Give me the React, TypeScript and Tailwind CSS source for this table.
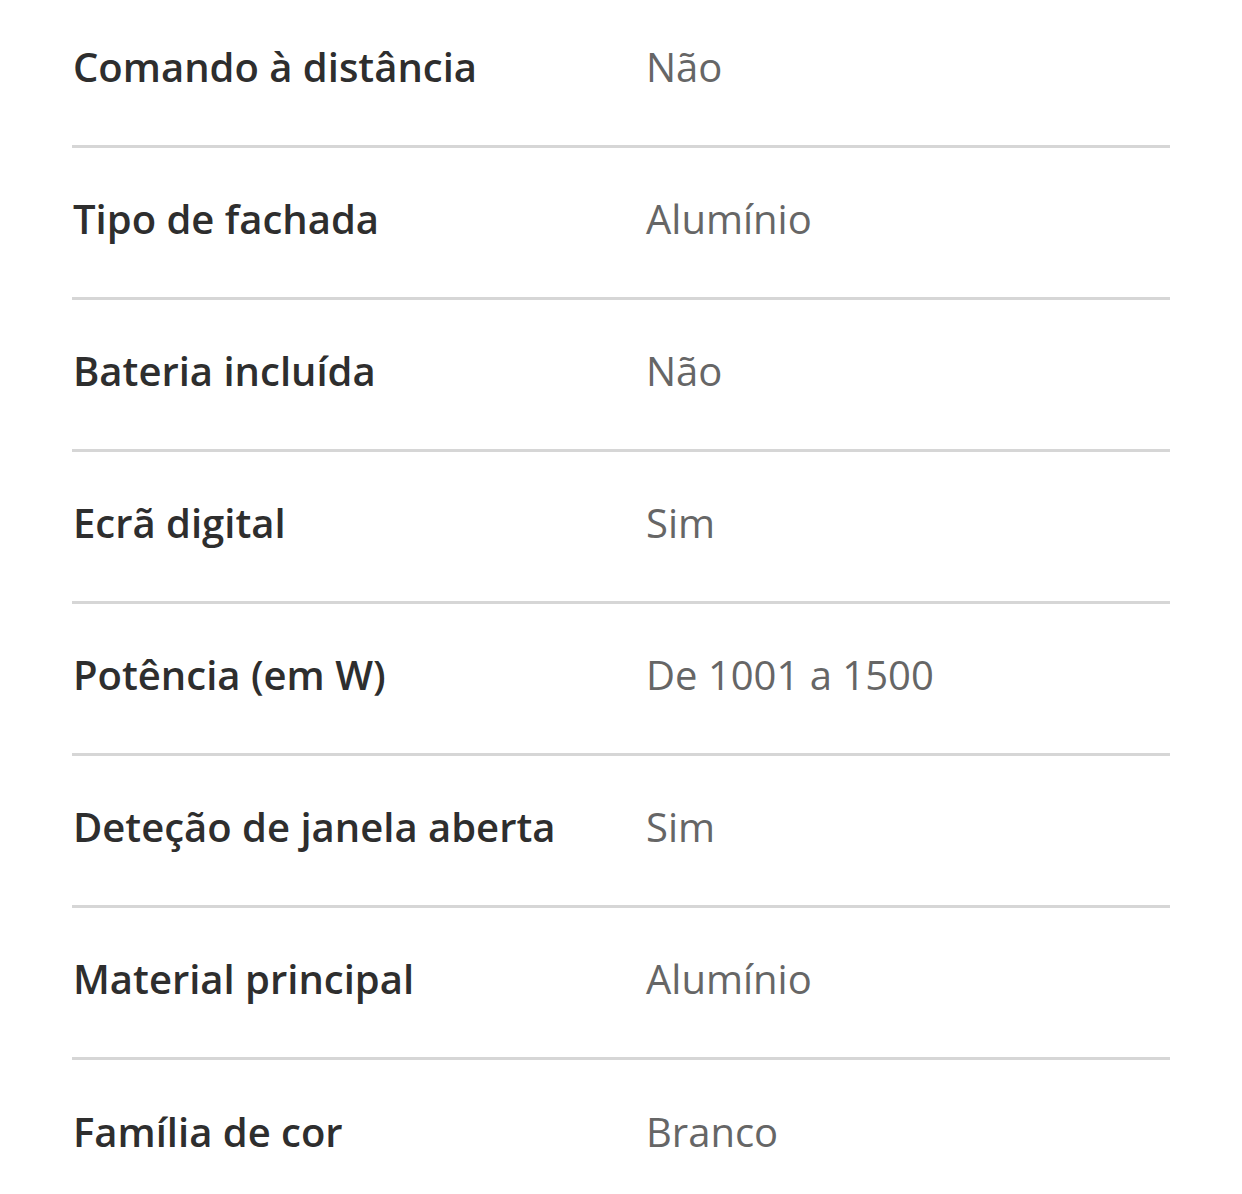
import React from "react";

const rows: [string, string][] = [
  ["Comando à distância", "Não"],
  ["Tipo de fachada", "Alumínio"],
  ["Bateria incluída", "Não"],
  ["Ecrã digital", "Sim"],
  ["Potência (em W)", "De 1001 a 1500"],
  ["Deteção de janela aberta", "Sim"],
  ["Material principal", "Alumínio"],
  ["Família de cor", "Branco"],
];

export default function App() {
  return (
    <div
      className="w-[1242px] h-[1194px] overflow-hidden bg-white"
      style={{ fontFamily: '"Open Sans", "Noto Sans", sans-serif' }}
    >
      <div className="ml-[72px] w-[1098px] -mt-[4px]">
        {rows.map(([k, v], i) => (
          <div
            key={k}
            className={
              "flex items-center h-[152px] pb-[8px] " +
              (i < rows.length - 1 ? "border-b-[3px] border-[#d6d6d6]" : "")
            }
          >
            <div className="w-[574px] pl-[1px] text-[40px] font-semibold text-[#2e2e2e] leading-none">
              {k}
            </div>
            <div className="text-[40px] font-normal text-[#666666] leading-none">{v}</div>
          </div>
        ))}
      </div>
    </div>
  );
}
